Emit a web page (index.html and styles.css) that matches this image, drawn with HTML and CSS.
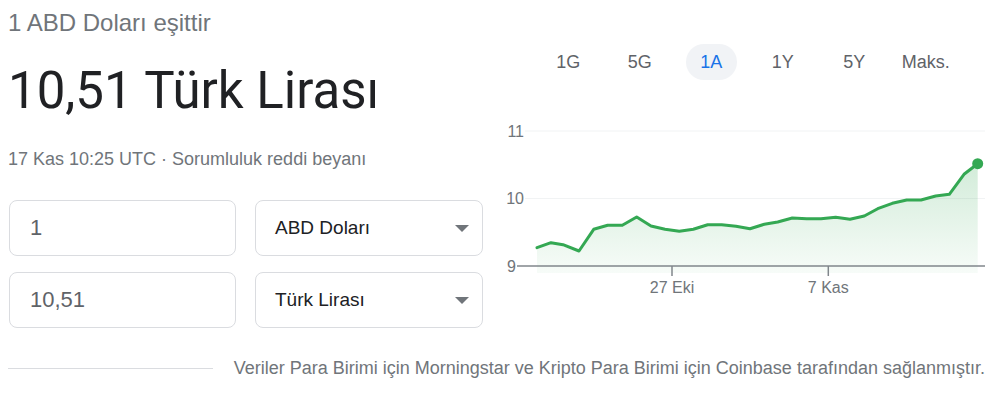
FILE: index.html
```html
<!DOCTYPE html>
<html lang="tr">
<head>
<meta charset="utf-8">
<link rel="stylesheet" href="styles.css">
</head>
<body>
<div class="page">
  <div class="left">
    <div class="eq">1 ABD Doları eşittir</div>
    <div class="result">10,51 Türk Lirası</div>
    <div class="meta">17 Kas 10:25 UTC · <span class="disc">Sorumluluk reddi beyanı</span></div>
    <div class="conv">
      <div class="box num">1</div>
      <div class="box sel"><span>ABD Doları</span><span class="caret"></span></div>
      <div class="box num">10,51</div>
      <div class="box sel"><span>Türk Lirası</span><span class="caret"></span></div>
    </div>
  </div>
  <div class="right">
    <div class="tabs">
      <div class="tab">1G</div>
      <div class="tab">5G</div>
      <div class="tab active"><span>1A</span></div>
      <div class="tab">1Y</div>
      <div class="tab">5Y</div>
      <div class="tab">Maks.</div>
    </div>
    <svg class="chart" width="500" height="190" viewBox="490 110 500 190">
      <defs>
        <linearGradient id="fill" x1="0" y1="0" x2="0" y2="1">
          <stop offset="0" stop-color="#34a853" stop-opacity="0.22"/>
          <stop offset="1" stop-color="#34a853" stop-opacity="0.04"/>
        </linearGradient>
      </defs>
      <line x1="525" y1="131" x2="985" y2="131" stroke="#f1f3f4" stroke-width="1"/>
      <line x1="525" y1="198.5" x2="985" y2="198.5" stroke="#f1f3f4" stroke-width="1"/>
      <text x="524" y="137" class="ylab" text-anchor="end">11</text>
      <text x="524" y="204" class="ylab" text-anchor="end">10</text>
      <text x="516" y="272" class="ylab" text-anchor="end">9</text>
      <path d="M537,247.7 L551,242.7 L563,244.7 L579,251 L593.7,229.3 L607.7,225.3 L622.3,225.3 L636.7,217 L651,226 L665,229.3 L679.3,231.3 L693.3,229.3 L707.7,224.7 L721.7,224.7 L736,226.3 L750,228.8 L764.3,224.3 L777.7,222 L792.3,218 L806.7,218.7 L821,218.7 L835.7,217.3 L850,219.3 L864.3,216 L877.7,208.7 L892.3,203.3 L906.7,200 L921,200 L935.7,196 L949.3,194.3 L964,174.3 L977.7,163.7 L977.7,273 L537,273 Z" fill="url(#fill)"/>
      <line x1="517" y1="266" x2="985" y2="266" stroke="#80868b" stroke-width="1.5"/>
      <line x1="672" y1="266" x2="672" y2="276" stroke="#80868b" stroke-width="1.5"/>
      <line x1="828.3" y1="266" x2="828.3" y2="276" stroke="#80868b" stroke-width="1.5"/>
      <text x="672" y="293" class="xlab" text-anchor="middle">27 Eki</text>
      <text x="828.3" y="293" class="xlab" text-anchor="middle">7 Kas</text>
      <path d="M537,247.7 L551,242.7 L563,244.7 L579,251 L593.7,229.3 L607.7,225.3 L622.3,225.3 L636.7,217 L651,226 L665,229.3 L679.3,231.3 L693.3,229.3 L707.7,224.7 L721.7,224.7 L736,226.3 L750,228.8 L764.3,224.3 L777.7,222 L792.3,218 L806.7,218.7 L821,218.7 L835.7,217.3 L850,219.3 L864.3,216 L877.7,208.7 L892.3,203.3 L906.7,200 L921,200 L935.7,196 L949.3,194.3 L964,174.3 L977.7,163.7" fill="none" stroke="#34a853" stroke-width="3" stroke-linejoin="round" stroke-linecap="round"/>
      <circle cx="977.7" cy="163.7" r="5.5" fill="#34a853"/>
    </svg>
  </div>
  <div class="footer">
    <div class="rule"></div>
    <div class="src">Veriler Para Birimi için Morningstar ve Kripto Para Birimi için Coinbase tarafından sağlanmıştır.</div>
  </div>
</div>
</body>
</html>
```

FILE: styles.css
```css
* { box-sizing: border-box; }
html, body { margin: 0; padding: 0; background: #fff; }
body {
  font-family: "Liberation Sans", Arial, sans-serif;
  color: #202124;
  width: 990px;
  height: 402px;
  overflow: hidden;
}
.page {
  display: grid;
  grid-template-columns: 490px 500px;
  grid-template-rows: auto auto;
}
.left {
  padding-left: 8px;
  padding-right: 7px;
}
.eq {
  font-size: 24px;
  line-height: 28px;
  color: #70757a;
  margin-top: 9px;
}
.result {
  font-family: Roboto, "Liberation Sans", sans-serif;
  font-size: 51px;
  line-height: 60px;
  color: #202124;
  margin-top: 24px;
}
.meta {
  font-size: 18px;
  line-height: 22px;
  color: #70757a;
  margin-top: 27px;
}
.conv {
  display: grid;
  grid-template-columns: 227px 228px;
  column-gap: 19px;
  row-gap: 16px;
  margin-top: 30px;
  padding-left: 1px;
}
.box {
  height: 56px;
  border: 1px solid #dadce0;
  border-radius: 8px;
  display: flex;
  align-items: center;
}
.num {
  font-size: 22px;
  color: #5f6368;
  padding-left: 20px;
}
.sel {
  font-size: 19px;
  color: #202124;
  padding-left: 19px;
  padding-right: 13px;
  justify-content: space-between;
}
.caret {
  width: 0;
  height: 0;
  border-left: 7px solid transparent;
  border-right: 7px solid transparent;
  border-top: 7px solid #70757a;
}
.right {
  display: flex;
  flex-direction: column;
}
.tabs {
  display: flex;
  padding-left: 42.5px;
  margin-top: 44px;
  height: 36px;
}
.tab {
  width: 71.5px;
  display: flex;
  align-items: center;
  justify-content: center;
  font-size: 18px;
  color: #5f6368;
}
.tab.active span {
  width: 51px;
  height: 36px;
  border-radius: 18px;
  background: #f1f3f6;
  color: #1a73e8;
  display: flex;
  align-items: center;
  justify-content: center;
}
.chart {
  display: block;
  margin-top: 30px;
}
.ylab {
  font-family: "Liberation Sans", Arial, sans-serif;
  font-size: 16px;
  fill: #70757a;
}
.xlab {
  font-family: "Liberation Sans", Arial, sans-serif;
  font-size: 16px;
  fill: #70757a;
}
.footer {
  grid-column: 1 / 3;
  display: flex;
  align-items: center;
  padding: 0 5px 0 8px;
  margin-top: 29px;
  gap: 21px;
}
.rule {
  width: 205px;
  height: 1px;
  background: #dadce0;
}
.src {
  font-size: 18px;
  line-height: 22px;
  color: #70757a;
  white-space: nowrap;
}
```
